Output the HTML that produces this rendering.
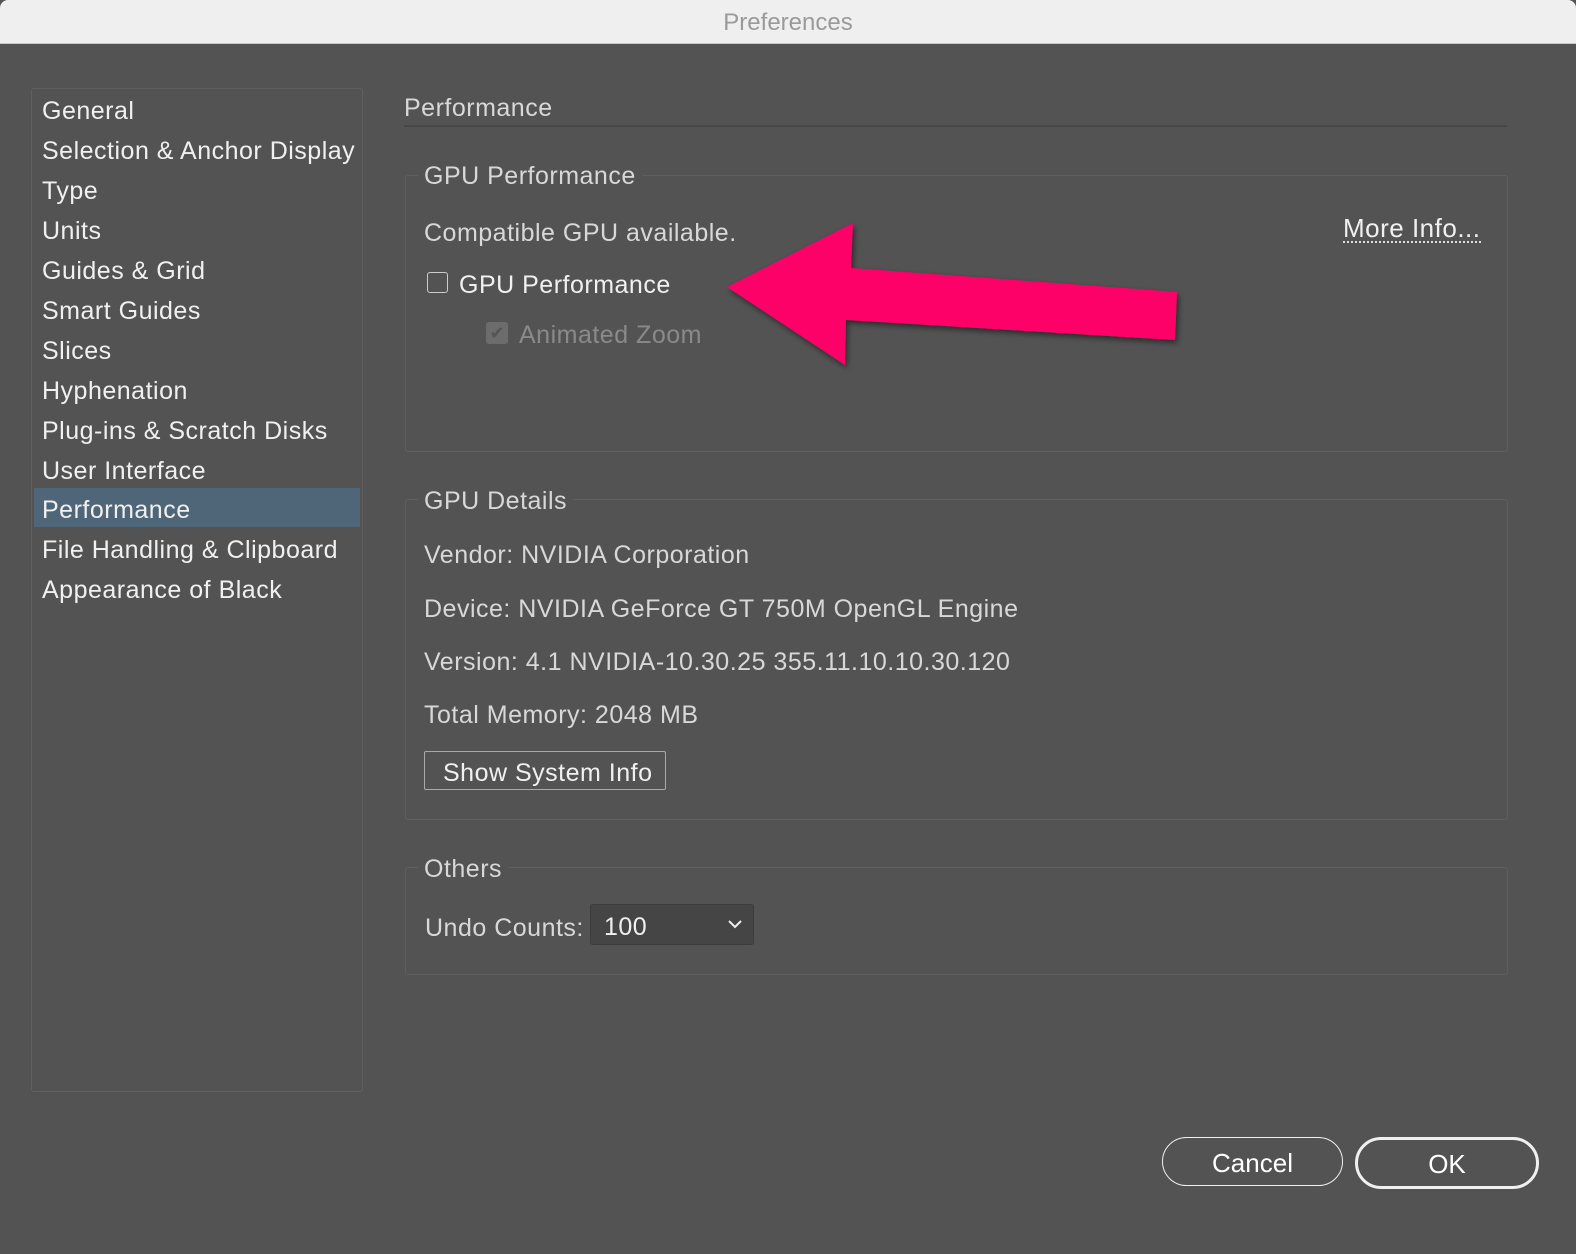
<!DOCTYPE html>
<html><head><style>
body{margin:0;width:1576px;height:1254px;background:#535353;font-family:"Liberation Sans",sans-serif;position:relative;overflow:hidden}
.t{position:absolute;white-space:nowrap;font-size:25px;color:#f0f0f0;letter-spacing:0.5px}
.g{color:#d8d8d8}
.title{position:absolute;left:0;top:0;width:1576px;height:43px;background:#efefef;border-bottom:1px solid #c8c8c8;text-align:center;line-height:46px;font-size:24px;color:#9a9a9a;border-radius:8px 8px 0 0}
.box{position:absolute;border:1px solid #5e5e5e;border-radius:3px}
.side{position:absolute;left:31px;top:88px;width:330px;height:1002px;border:1px solid #5f5f5f;border-radius:3px;background:#535353}
.sel{position:absolute;left:34px;top:488px;width:326px;height:39px;background:#4f6578}
.pill{position:absolute;border:2px solid #f0f0f0;border-radius:26px;color:#fff;font-size:26px;text-align:center}
</style></head><body>
<div class="title">Preferences</div>
<div class="side"></div>
<div class="sel"></div>
<div class="t" style="left:42px;top:97px">General</div>
<div class="t" style="left:42px;top:137px">Selection &amp; Anchor Display</div>
<div class="t" style="left:42px;top:177px">Type</div>
<div class="t" style="left:42px;top:217px">Units</div>
<div class="t" style="left:42px;top:257px">Guides &amp; Grid</div>
<div class="t" style="left:42px;top:297px">Smart Guides</div>
<div class="t" style="left:42px;top:337px">Slices</div>
<div class="t" style="left:42px;top:377px">Hyphenation</div>
<div class="t" style="left:42px;top:417px">Plug-ins &amp; Scratch Disks</div>
<div class="t" style="left:42px;top:457px">User Interface</div>
<div class="t" style="left:42px;top:496px">Performance</div>
<div class="t" style="left:42px;top:536px">File Handling &amp; Clipboard</div>
<div class="t" style="left:42px;top:576px">Appearance of Black</div>

<div class="t g" style="left:404px;top:94px">Performance</div>
<div style="position:absolute;left:404px;top:125px;width:1103px;height:2px;background:#474747"></div>

<div class="box" style="left:405px;top:175px;width:1101px;height:275px"></div>
<div class="t g" style="left:418px;top:162px;background:#535353;padding:0 6px">GPU Performance</div>
<div class="t g" style="left:424px;top:219px">Compatible GPU available.</div>
<div class="t" style="left:1343px;top:215px;border-bottom:2px dotted #ddd;line-height:26px;font-size:26px">More Info...</div>
<div style="position:absolute;left:427px;top:272px;width:19px;height:19px;border:1.5px solid #ccc;border-radius:3px"></div>
<div class="t" style="left:459px;top:271px">GPU Performance</div>
<div style="position:absolute;left:486px;top:322px;width:22px;height:22px;background:#6c6c6c;border-radius:3px;color:#555;font-size:18px;text-align:center;line-height:22px">✔</div>
<div class="t" style="left:519px;top:321px;color:#8a8a8a">Animated Zoom</div>

<div class="box" style="left:405px;top:499px;width:1101px;height:319px"></div>
<div class="t g" style="left:418px;top:487px;background:#535353;padding:0 6px">GPU Details</div>
<div class="t g" style="left:424px;top:541px">Vendor: NVIDIA Corporation</div>
<div class="t g" style="left:424px;top:595px">Device: NVIDIA GeForce GT 750M OpenGL Engine</div>
<div class="t g" style="left:424px;top:648px">Version: 4.1 NVIDIA-10.30.25 355.11.10.10.30.120</div>
<div class="t g" style="left:424px;top:701px">Total Memory: 2048 MB</div>
<div style="position:absolute;left:424px;top:751px;width:240px;height:37px;border:1px solid #aaa;border-radius:2px"></div>
<div class="t" style="left:443px;top:759px">Show System Info</div>

<div class="box" style="left:405px;top:867px;width:1101px;height:106px"></div>
<div class="t g" style="left:418px;top:855px;background:#535353;padding:0 6px">Others</div>
<div class="t g" style="left:425px;top:914px">Undo Counts:</div>
<div style="position:absolute;left:590px;top:904px;width:162px;height:39px;background:#454545;border:1px solid #3c3c3c;border-radius:3px"></div>
<div class="t" style="left:604px;top:913px">100</div>
<svg style="position:absolute;left:727px;top:918px" width="16" height="12"><path d="M2 3 L8 9 L14 3" stroke="#eee" stroke-width="2" fill="none"/></svg>

<svg style="position:absolute;left:0;top:0" width="1576" height="1254">
<defs><filter id="s"><feDropShadow dx="2" dy="3" stdDeviation="3" flood-opacity="0.5"/></filter></defs>
<polygon filter="url(#s)" fill="#fd0068" points="727,287 853,223 851,268 1177,292 1175,340 846,320 845,365"/>
</svg>

<div class="pill" style="left:1162px;top:1137px;width:179px;height:47px;line-height:50px;border-width:1.5px">Cancel</div>
<div class="pill" style="left:1355px;top:1137px;width:178px;height:46px;line-height:48px;border-width:3px">OK</div>
</body></html>
